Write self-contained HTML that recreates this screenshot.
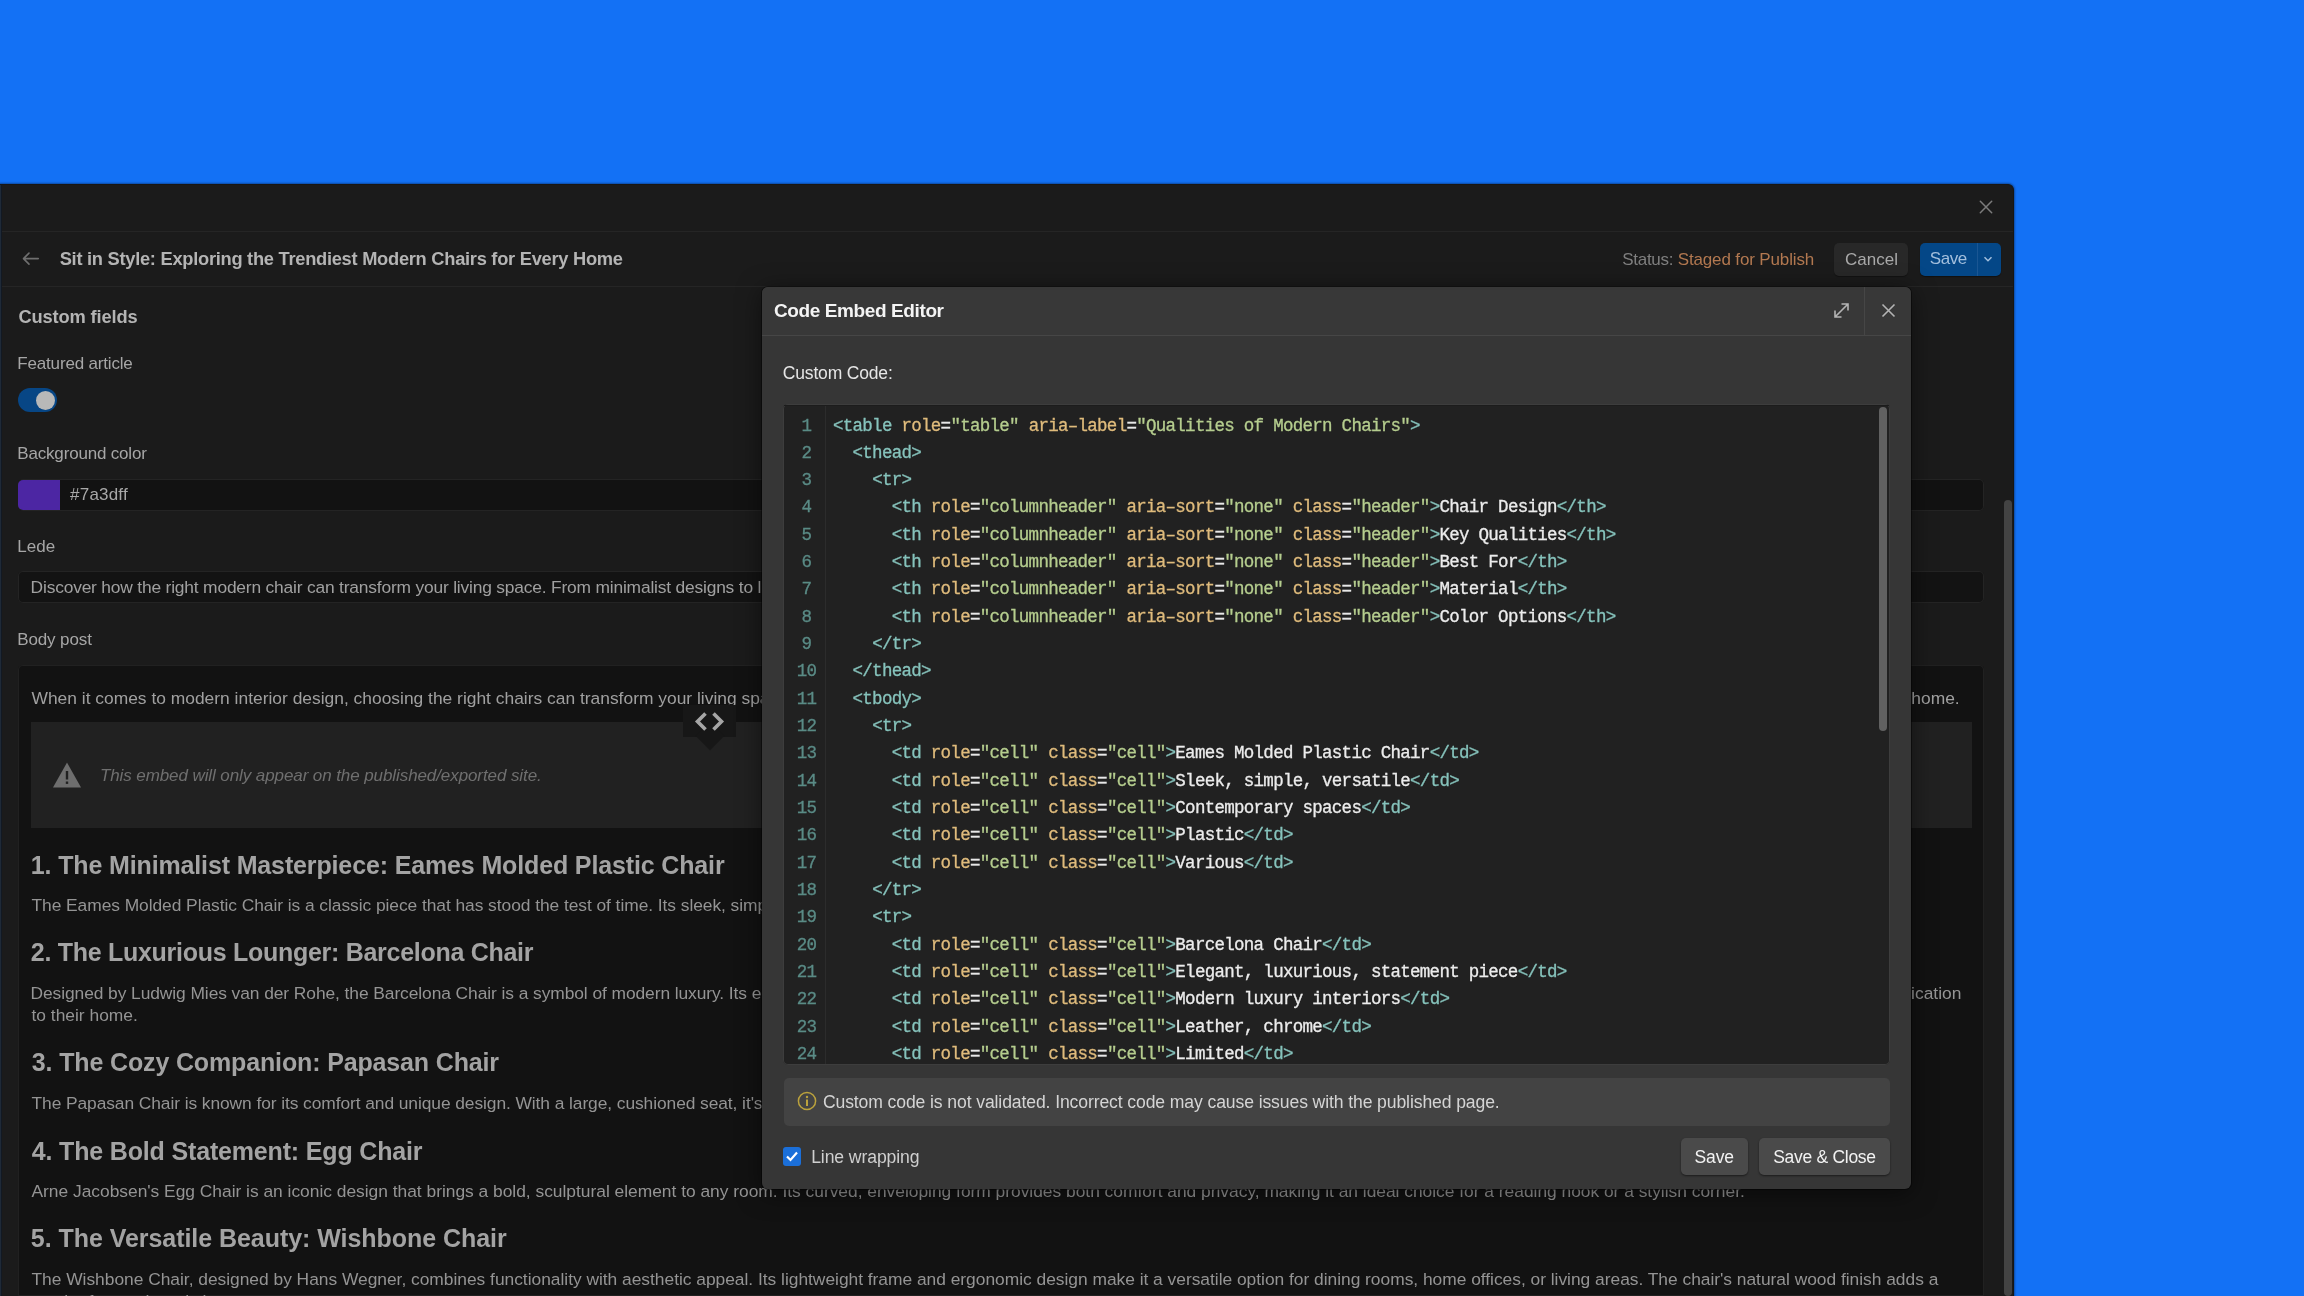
<!DOCTYPE html><html><head><meta charset="utf-8"><style>
html,body{margin:0;padding:0;width:2304px;height:1296px;overflow:hidden;background:#1371f5;font-family:"Liberation Sans",sans-serif;}
.t{position:absolute;line-height:0;white-space:pre;}
.m{position:absolute;white-space:pre;font-family:"Liberation Mono",monospace;-webkit-text-stroke:0.3px currentColor;}
</style></head><body>
<div style="position:absolute;left:0;top:0;width:2304px;height:1296px;will-change:transform">
<div style="position:absolute;left:0px;top:184px;width:2014px;height:1112px;background:#1b1b1b;border-top-right-radius:6px;box-shadow:0 0 2px 1px rgba(0,0,0,0.35);border-top:1px solid #181614;border-right:1px solid #161616;box-sizing:border-box;"></div>
<div style="position:absolute;left:0px;top:185px;width:1px;height:1111px;background:#1f2a38;"></div>
<div style="position:absolute;left:1px;top:185px;width:1px;height:1111px;background:#121923;"></div>
<div style="position:absolute;left:2px;top:231px;width:2011px;height:1px;background:#252525;"></div>
<div style="position:absolute;left:2px;top:286px;width:2011px;height:1px;background:#252525;"></div>
<svg style="position:absolute;left:1979px;top:200px" width="14" height="14" viewBox="0 0 14 14"><path d="M1.3 1.3L12.7 12.7M12.7 1.3L1.3 12.7" stroke="#7c7c7c" stroke-width="1.5" stroke-linecap="round" fill="none"/></svg>
<svg style="position:absolute;left:22px;top:251px" width="18" height="16" viewBox="0 0 18 16"><path d="M16.3 7.6H1.6M7 2.1L1.5 7.6L7 13.1" stroke="#6f6f6f" stroke-width="1.6" stroke-linecap="round" stroke-linejoin="round" fill="none"/></svg>
<div class="t" style="left:59.70px;top:258.50px;font-size:18.3px;color:#b4b4b4;font-weight:700;letter-spacing:-0.274px;font-style:normal;">Sit in Style: Exploring the Trendiest Modern Chairs for Every Home</div>
<div class="t" style="left:1622.30px;top:259.70px;font-size:17px;color:#7f7f7f;font-weight:400;letter-spacing:-0.300px;font-style:normal;">Status:</div>
<div class="t" style="left:1677.70px;top:259.70px;font-size:17px;color:#b27850;font-weight:400;letter-spacing:-0.141px;font-style:normal;">Staged for Publish</div>
<div style="position:absolute;left:1834px;top:243px;width:74px;height:33px;background:#282828;border-radius:5px;box-shadow:0 1px 1px rgba(0,0,0,0.35);"></div>
<div class="t" style="left:1845.10px;top:259.70px;font-size:17px;color:#a9a9a9;font-weight:400;letter-spacing:0.000px;font-style:normal;">Cancel</div>
<div style="position:absolute;left:1920px;top:243px;width:81px;height:33px;background:#044787;border-radius:5px;box-shadow:0 1px 1px rgba(0,0,0,0.4);"></div>
<div style="position:absolute;left:1976.5px;top:243px;width:1.5px;height:33px;background:#1a5693;"></div>
<div class="t" style="left:1929.80px;top:259.00px;font-size:17px;color:#a3bfdd;font-weight:400;letter-spacing:-0.467px;font-style:normal;">Save</div>
<svg style="position:absolute;left:1982px;top:254px" width="12" height="10" viewBox="0 0 12 10"><path d="M2.5 3.2L6 6.7L9.5 3.2" stroke="#a3bfdd" stroke-width="1.5" fill="none"/></svg>
<div class="t" style="left:18.40px;top:316.50px;font-size:18.3px;color:#b4b4b4;font-weight:700;letter-spacing:-0.133px;font-style:normal;">Custom fields</div>
<div class="t" style="left:17.30px;top:363.50px;font-size:17px;color:#a6a6a6;font-weight:400;letter-spacing:-0.173px;font-style:normal;">Featured article</div>
<div style="position:absolute;left:18px;top:388px;width:39px;height:24px;background:#074685;border-radius:12px;"></div>
<div style="position:absolute;left:35.5px;top:391px;width:19.0px;height:19px;background:#b8b8b8;border-radius:50%;"></div>
<div class="t" style="left:17.30px;top:453.50px;font-size:17px;color:#a6a6a6;font-weight:400;letter-spacing:-0.180px;font-style:normal;">Background color</div>
<div style="position:absolute;left:18px;top:479px;width:1966px;height:32px;background:#121212;border-radius:5px;box-shadow:inset 0 0 0 1px #242424;"></div>
<div style="position:absolute;left:18px;top:480px;width:42px;height:30px;background:#4c26a3;border-radius:5px 0 0 5px;"></div>
<div class="t" style="left:70.10px;top:495.00px;font-size:17px;color:#a8a8a8;font-weight:400;letter-spacing:0.200px;font-style:normal;">#7a3dff</div>
<div class="t" style="left:17.20px;top:546.50px;font-size:17px;color:#a6a6a6;font-weight:400;letter-spacing:0.033px;font-style:normal;">Lede</div>
<div style="position:absolute;left:18px;top:571px;width:1966px;height:32px;background:#131313;border-radius:5px;box-shadow:inset 0 0 0 1px #242424;"></div>
<div class="t" style="left:30.60px;top:587.00px;font-size:17.4px;color:#a0a0a0;font-weight:400;letter-spacing:-0.190px;font-style:normal;">Discover how the right modern chair can transform your living space. From minimalist designs to luxurious loungers, find the seat that fits your style.</div>
<div class="t" style="left:17.20px;top:639.50px;font-size:17px;color:#a6a6a6;font-weight:400;letter-spacing:-0.113px;font-style:normal;">Body post</div>
<div style="position:absolute;left:18px;top:665px;width:1966px;height:631px;background:#121212;border-radius:5px 5px 0 0;box-shadow:inset 0 0 0 1px #212121;"></div>
<div class="t" style="left:31.50px;top:698.00px;font-size:17.4px;color:#a0a0a0;font-weight:400;letter-spacing:0.005px;font-style:normal;">When it comes to modern interior design, choosing the right chairs can transform your living space. Whether you prefer clean Scandinavian lines or plush mid-century comfort, there is a chair that</div>
<div class="t" style="left:1765.40px;top:698.00px;font-size:17.4px;color:#a0a0a0;font-weight:400;letter-spacing:0.000px;font-style:normal;">truly elevates your home.</div>
<div style="position:absolute;left:31px;top:722px;width:1941px;height:106px;background:#212121;"></div>
<div style="position:absolute;left:683px;top:704.5px;width:53px;height:32.5px;background:#171717;"></div>
<div style="position:absolute;left:699.5px;top:726px;width:20px;height:20px;background:#171717;transform:rotate(45deg)"></div>
<svg style="position:absolute;left:683px;top:704px" width="53" height="34" viewBox="0 0 53 34"><path d="M22.5 9.5L14.5 17.5L22.5 25.5M30.5 9.5L38.5 17.5L30.5 25.5" stroke="#a6a6a6" stroke-width="3.6" fill="none"/></svg>
<svg style="position:absolute;left:52px;top:761px" width="30" height="27" viewBox="0 0 30 27"><path d="M15 1.5L29 26.5H1Z" fill="#6e6e6e"/><rect x="13.8" y="10" width="2.4" height="8.5" fill="#212121"/><rect x="13.8" y="20.5" width="2.4" height="2.4" fill="#212121"/></svg>
<div class="t" style="left:99.90px;top:775.70px;font-size:17px;color:#6f6f6f;font-weight:400;letter-spacing:-0.088px;font-style:italic;">This embed will only appear on the published/exported site.</div>
<div class="t" style="left:30.80px;top:865.00px;font-size:25px;color:#a3a3a3;font-weight:700;letter-spacing:-0.139px;font-style:normal;">1. The Minimalist Masterpiece: Eames Molded Plastic Chair</div>
<div class="t" style="left:30.80px;top:952.20px;font-size:25px;color:#a3a3a3;font-weight:700;letter-spacing:-0.283px;font-style:normal;">2. The Luxurious Lounger: Barcelona Chair</div>
<div class="t" style="left:31.80px;top:1061.60px;font-size:25px;color:#a3a3a3;font-weight:700;letter-spacing:-0.143px;font-style:normal;">3. The Cozy Companion: Papasan Chair</div>
<div class="t" style="left:31.80px;top:1150.50px;font-size:25px;color:#a3a3a3;font-weight:700;letter-spacing:-0.165px;font-style:normal;">4. The Bold Statement: Egg Chair</div>
<div class="t" style="left:30.80px;top:1238.40px;font-size:25px;color:#a3a3a3;font-weight:700;letter-spacing:-0.047px;font-style:normal;">5. The Versatile Beauty: Wishbone Chair</div>
<div class="t" style="left:31.50px;top:905.20px;font-size:17.4px;color:#949494;font-weight:400;letter-spacing:-0.059px;font-style:normal;">The Eames Molded Plastic Chair is a classic piece that has stood the test of time. Its sleek, simple design fits almost anywhere.</div>
<div class="t" style="left:30.50px;top:992.90px;font-size:17.4px;color:#949494;font-weight:400;letter-spacing:-0.079px;font-style:normal;">Designed by Ludwig Mies van der Rohe, the Barcelona Chair is a symbol of modern luxury. Its elegant frame and sumptuous leather cushions make it the perfect choice for anyone looking to bring timeless</div>
<div class="t" style="left:31.50px;top:1014.80px;font-size:17.4px;color:#949494;font-weight:400;letter-spacing:0.000px;font-style:normal;">to their home.</div>
<div class="t" style="left:31.50px;top:1103.10px;font-size:17.4px;color:#949494;font-weight:400;letter-spacing:-0.083px;font-style:normal;">The Papasan Chair is known for its comfort and unique design. With a large, cushioned seat, it&#x27;s perfect for lounging.</div>
<div class="t" style="left:31.50px;top:1191.40px;font-size:17.4px;color:#949494;font-weight:400;letter-spacing:-0.016px;font-style:normal;">Arne Jacobsen&#x27;s Egg Chair is an iconic design that brings a bold, sculptural element to any room. Its curved, enveloping form provides both comfort and privacy, making it an ideal choice for a reading nook or a stylish corner.</div>
<div class="t" style="left:31.50px;top:1279.00px;font-size:17.4px;color:#949494;font-weight:400;letter-spacing:-0.023px;font-style:normal;">The Wishbone Chair, designed by Hans Wegner, combines functionality with aesthetic appeal. Its lightweight frame and ergonomic design make it a versatile option for dining rooms, home offices, or living areas. The chair&#x27;s natural wood finish adds a</div>
<div class="t" style="left:31.50px;top:1301.00px;font-size:17.4px;color:#949494;font-weight:400;letter-spacing:0.000px;font-style:normal;">touch of warmth and character to any space.</div>
<div class="t" style="left:1665.50px;top:992.90px;font-size:17.4px;color:#949494;font-weight:400;letter-spacing:0.000px;font-style:normal;">elegance and a touch of sophistication</div>
<div style="position:absolute;left:2004px;top:500px;width:8px;height:796px;background:#434343;border-radius:4px;"></div>
<div style="position:absolute;left:762px;top:287px;width:1149px;height:902px;background:#363636;border-radius:6px;box-shadow:0 0 0 1px rgba(0,0,0,0.45), 0 4px 24px rgba(0,0,0,0.5);"></div>
<div style="position:absolute;left:762px;top:287px;width:1149px;height:48px;background:#383838;border-radius:6px 6px 0 0;"></div>
<div style="position:absolute;left:762px;top:335px;width:1149px;height:1px;background:#464646;"></div>
<div style="position:absolute;left:1864px;top:287px;width:1px;height:48px;background:#464646;"></div>
<div class="t" style="left:774.00px;top:310.50px;font-size:19px;color:#f4f4f4;font-weight:700;letter-spacing:-0.394px;font-style:normal;">Code Embed Editor</div>
<svg style="position:absolute;left:1832px;top:301px" width="19" height="19" viewBox="0 0 19 19"><path d="M3 16L16 3M9.5 3H16V9.5M3 9.5V16H9.5" stroke="#b4b4b4" stroke-width="1.6" fill="none"/></svg>
<svg style="position:absolute;left:1881px;top:303px" width="15" height="15" viewBox="0 0 15 15"><path d="M1.5 1.5L13.5 13.5M13.5 1.5L1.5 13.5" stroke="#b4b4b4" stroke-width="1.6" fill="none"/></svg>
<div class="t" style="left:782.80px;top:373.00px;font-size:17.5px;color:#e6e6e6;font-weight:400;letter-spacing:-0.173px;font-style:normal;">Custom Code:</div>
<div style="position:absolute;left:783px;top:404px;width:1107px;height:661px;background:#212121;border-radius:5px;box-shadow:inset 0 0 0 1px #3d3d3d;"></div>
<div style="position:absolute;left:784px;top:405px;width:1105px;height:1px;background:#1c1c1c;"></div>
<div style="position:absolute;left:825px;top:406px;width:1px;height:658px;background:#2c2c2c;"></div>
<div style="position:absolute;left:1879px;top:407px;width:8px;height:324px;background:#616161;border-radius:4px;"></div>
<div class="m" style="left:833px;top:425.50px;line-height:0;font-size:17.5px;letter-spacing:-0.7217px"><span style="color:#86c3bc">&lt;table</span> <span style="color:#dfbb7c">role</span><span style="color:#e8e8e8">=</span><span style="color:#b5cd8e">"table"</span> <span style="color:#dfbb7c">aria&#8211;label</span><span style="color:#e8e8e8">=</span><span style="color:#b5cd8e">"Qualities of Modern Chairs"</span><span style="color:#86c3bc">&gt;</span></div>
<div class="m" style="left:801.61px;top:425.50px;line-height:0;font-size:17.5px;color:#5a8b86;letter-spacing:-0.7217px">1</div>
<div class="m" style="left:833px;top:452.83px;line-height:0;font-size:17.5px;letter-spacing:-0.7217px">  <span style="color:#86c3bc">&lt;thead&gt;</span></div>
<div class="m" style="left:801.61px;top:452.83px;line-height:0;font-size:17.5px;color:#5a8b86;letter-spacing:-0.7217px">2</div>
<div class="m" style="left:833px;top:480.16px;line-height:0;font-size:17.5px;letter-spacing:-0.7217px">    <span style="color:#86c3bc">&lt;tr&gt;</span></div>
<div class="m" style="left:801.61px;top:480.16px;line-height:0;font-size:17.5px;color:#5a8b86;letter-spacing:-0.7217px">3</div>
<div class="m" style="left:833px;top:507.49px;line-height:0;font-size:17.5px;letter-spacing:-0.7217px">      <span style="color:#86c3bc">&lt;th</span> <span style="color:#dfbb7c">role</span><span style="color:#e8e8e8">=</span><span style="color:#b5cd8e">"columnheader"</span> <span style="color:#dfbb7c">aria&#8211;sort</span><span style="color:#e8e8e8">=</span><span style="color:#b5cd8e">"none"</span> <span style="color:#dfbb7c">class</span><span style="color:#e8e8e8">=</span><span style="color:#b5cd8e">"header"</span><span style="color:#86c3bc">&gt;</span><span style="color:#ececec">Chair Design</span><span style="color:#86c3bc">&lt;/th&gt;</span></div>
<div class="m" style="left:801.61px;top:507.49px;line-height:0;font-size:17.5px;color:#5a8b86;letter-spacing:-0.7217px">4</div>
<div class="m" style="left:833px;top:534.82px;line-height:0;font-size:17.5px;letter-spacing:-0.7217px">      <span style="color:#86c3bc">&lt;th</span> <span style="color:#dfbb7c">role</span><span style="color:#e8e8e8">=</span><span style="color:#b5cd8e">"columnheader"</span> <span style="color:#dfbb7c">aria&#8211;sort</span><span style="color:#e8e8e8">=</span><span style="color:#b5cd8e">"none"</span> <span style="color:#dfbb7c">class</span><span style="color:#e8e8e8">=</span><span style="color:#b5cd8e">"header"</span><span style="color:#86c3bc">&gt;</span><span style="color:#ececec">Key Qualities</span><span style="color:#86c3bc">&lt;/th&gt;</span></div>
<div class="m" style="left:801.61px;top:534.82px;line-height:0;font-size:17.5px;color:#5a8b86;letter-spacing:-0.7217px">5</div>
<div class="m" style="left:833px;top:562.15px;line-height:0;font-size:17.5px;letter-spacing:-0.7217px">      <span style="color:#86c3bc">&lt;th</span> <span style="color:#dfbb7c">role</span><span style="color:#e8e8e8">=</span><span style="color:#b5cd8e">"columnheader"</span> <span style="color:#dfbb7c">aria&#8211;sort</span><span style="color:#e8e8e8">=</span><span style="color:#b5cd8e">"none"</span> <span style="color:#dfbb7c">class</span><span style="color:#e8e8e8">=</span><span style="color:#b5cd8e">"header"</span><span style="color:#86c3bc">&gt;</span><span style="color:#ececec">Best For</span><span style="color:#86c3bc">&lt;/th&gt;</span></div>
<div class="m" style="left:801.61px;top:562.15px;line-height:0;font-size:17.5px;color:#5a8b86;letter-spacing:-0.7217px">6</div>
<div class="m" style="left:833px;top:589.48px;line-height:0;font-size:17.5px;letter-spacing:-0.7217px">      <span style="color:#86c3bc">&lt;th</span> <span style="color:#dfbb7c">role</span><span style="color:#e8e8e8">=</span><span style="color:#b5cd8e">"columnheader"</span> <span style="color:#dfbb7c">aria&#8211;sort</span><span style="color:#e8e8e8">=</span><span style="color:#b5cd8e">"none"</span> <span style="color:#dfbb7c">class</span><span style="color:#e8e8e8">=</span><span style="color:#b5cd8e">"header"</span><span style="color:#86c3bc">&gt;</span><span style="color:#ececec">Material</span><span style="color:#86c3bc">&lt;/th&gt;</span></div>
<div class="m" style="left:801.61px;top:589.48px;line-height:0;font-size:17.5px;color:#5a8b86;letter-spacing:-0.7217px">7</div>
<div class="m" style="left:833px;top:616.81px;line-height:0;font-size:17.5px;letter-spacing:-0.7217px">      <span style="color:#86c3bc">&lt;th</span> <span style="color:#dfbb7c">role</span><span style="color:#e8e8e8">=</span><span style="color:#b5cd8e">"columnheader"</span> <span style="color:#dfbb7c">aria&#8211;sort</span><span style="color:#e8e8e8">=</span><span style="color:#b5cd8e">"none"</span> <span style="color:#dfbb7c">class</span><span style="color:#e8e8e8">=</span><span style="color:#b5cd8e">"header"</span><span style="color:#86c3bc">&gt;</span><span style="color:#ececec">Color Options</span><span style="color:#86c3bc">&lt;/th&gt;</span></div>
<div class="m" style="left:801.61px;top:616.81px;line-height:0;font-size:17.5px;color:#5a8b86;letter-spacing:-0.7217px">8</div>
<div class="m" style="left:833px;top:644.14px;line-height:0;font-size:17.5px;letter-spacing:-0.7217px">    <span style="color:#86c3bc">&lt;/tr&gt;</span></div>
<div class="m" style="left:801.61px;top:644.14px;line-height:0;font-size:17.5px;color:#5a8b86;letter-spacing:-0.7217px">9</div>
<div class="m" style="left:833px;top:671.47px;line-height:0;font-size:17.5px;letter-spacing:-0.7217px">  <span style="color:#86c3bc">&lt;/thead&gt;</span></div>
<div class="m" style="left:796.72px;top:671.47px;line-height:0;font-size:17.5px;color:#5a8b86;letter-spacing:-0.7217px">10</div>
<div class="m" style="left:833px;top:698.80px;line-height:0;font-size:17.5px;letter-spacing:-0.7217px">  <span style="color:#86c3bc">&lt;tbody&gt;</span></div>
<div class="m" style="left:796.72px;top:698.80px;line-height:0;font-size:17.5px;color:#5a8b86;letter-spacing:-0.7217px">11</div>
<div class="m" style="left:833px;top:726.13px;line-height:0;font-size:17.5px;letter-spacing:-0.7217px">    <span style="color:#86c3bc">&lt;tr&gt;</span></div>
<div class="m" style="left:796.72px;top:726.13px;line-height:0;font-size:17.5px;color:#5a8b86;letter-spacing:-0.7217px">12</div>
<div class="m" style="left:833px;top:753.46px;line-height:0;font-size:17.5px;letter-spacing:-0.7217px">      <span style="color:#86c3bc">&lt;td</span> <span style="color:#dfbb7c">role</span><span style="color:#e8e8e8">=</span><span style="color:#b5cd8e">"cell"</span> <span style="color:#dfbb7c">class</span><span style="color:#e8e8e8">=</span><span style="color:#b5cd8e">"cell"</span><span style="color:#86c3bc">&gt;</span><span style="color:#ececec">Eames Molded Plastic Chair</span><span style="color:#86c3bc">&lt;/td&gt;</span></div>
<div class="m" style="left:796.72px;top:753.46px;line-height:0;font-size:17.5px;color:#5a8b86;letter-spacing:-0.7217px">13</div>
<div class="m" style="left:833px;top:780.79px;line-height:0;font-size:17.5px;letter-spacing:-0.7217px">      <span style="color:#86c3bc">&lt;td</span> <span style="color:#dfbb7c">role</span><span style="color:#e8e8e8">=</span><span style="color:#b5cd8e">"cell"</span> <span style="color:#dfbb7c">class</span><span style="color:#e8e8e8">=</span><span style="color:#b5cd8e">"cell"</span><span style="color:#86c3bc">&gt;</span><span style="color:#ececec">Sleek, simple, versatile</span><span style="color:#86c3bc">&lt;/td&gt;</span></div>
<div class="m" style="left:796.72px;top:780.79px;line-height:0;font-size:17.5px;color:#5a8b86;letter-spacing:-0.7217px">14</div>
<div class="m" style="left:833px;top:808.12px;line-height:0;font-size:17.5px;letter-spacing:-0.7217px">      <span style="color:#86c3bc">&lt;td</span> <span style="color:#dfbb7c">role</span><span style="color:#e8e8e8">=</span><span style="color:#b5cd8e">"cell"</span> <span style="color:#dfbb7c">class</span><span style="color:#e8e8e8">=</span><span style="color:#b5cd8e">"cell"</span><span style="color:#86c3bc">&gt;</span><span style="color:#ececec">Contemporary spaces</span><span style="color:#86c3bc">&lt;/td&gt;</span></div>
<div class="m" style="left:796.72px;top:808.12px;line-height:0;font-size:17.5px;color:#5a8b86;letter-spacing:-0.7217px">15</div>
<div class="m" style="left:833px;top:835.45px;line-height:0;font-size:17.5px;letter-spacing:-0.7217px">      <span style="color:#86c3bc">&lt;td</span> <span style="color:#dfbb7c">role</span><span style="color:#e8e8e8">=</span><span style="color:#b5cd8e">"cell"</span> <span style="color:#dfbb7c">class</span><span style="color:#e8e8e8">=</span><span style="color:#b5cd8e">"cell"</span><span style="color:#86c3bc">&gt;</span><span style="color:#ececec">Plastic</span><span style="color:#86c3bc">&lt;/td&gt;</span></div>
<div class="m" style="left:796.72px;top:835.45px;line-height:0;font-size:17.5px;color:#5a8b86;letter-spacing:-0.7217px">16</div>
<div class="m" style="left:833px;top:862.78px;line-height:0;font-size:17.5px;letter-spacing:-0.7217px">      <span style="color:#86c3bc">&lt;td</span> <span style="color:#dfbb7c">role</span><span style="color:#e8e8e8">=</span><span style="color:#b5cd8e">"cell"</span> <span style="color:#dfbb7c">class</span><span style="color:#e8e8e8">=</span><span style="color:#b5cd8e">"cell"</span><span style="color:#86c3bc">&gt;</span><span style="color:#ececec">Various</span><span style="color:#86c3bc">&lt;/td&gt;</span></div>
<div class="m" style="left:796.72px;top:862.78px;line-height:0;font-size:17.5px;color:#5a8b86;letter-spacing:-0.7217px">17</div>
<div class="m" style="left:833px;top:890.11px;line-height:0;font-size:17.5px;letter-spacing:-0.7217px">    <span style="color:#86c3bc">&lt;/tr&gt;</span></div>
<div class="m" style="left:796.72px;top:890.11px;line-height:0;font-size:17.5px;color:#5a8b86;letter-spacing:-0.7217px">18</div>
<div class="m" style="left:833px;top:917.44px;line-height:0;font-size:17.5px;letter-spacing:-0.7217px">    <span style="color:#86c3bc">&lt;tr&gt;</span></div>
<div class="m" style="left:796.72px;top:917.44px;line-height:0;font-size:17.5px;color:#5a8b86;letter-spacing:-0.7217px">19</div>
<div class="m" style="left:833px;top:944.77px;line-height:0;font-size:17.5px;letter-spacing:-0.7217px">      <span style="color:#86c3bc">&lt;td</span> <span style="color:#dfbb7c">role</span><span style="color:#e8e8e8">=</span><span style="color:#b5cd8e">"cell"</span> <span style="color:#dfbb7c">class</span><span style="color:#e8e8e8">=</span><span style="color:#b5cd8e">"cell"</span><span style="color:#86c3bc">&gt;</span><span style="color:#ececec">Barcelona Chair</span><span style="color:#86c3bc">&lt;/td&gt;</span></div>
<div class="m" style="left:796.72px;top:944.77px;line-height:0;font-size:17.5px;color:#5a8b86;letter-spacing:-0.7217px">20</div>
<div class="m" style="left:833px;top:972.10px;line-height:0;font-size:17.5px;letter-spacing:-0.7217px">      <span style="color:#86c3bc">&lt;td</span> <span style="color:#dfbb7c">role</span><span style="color:#e8e8e8">=</span><span style="color:#b5cd8e">"cell"</span> <span style="color:#dfbb7c">class</span><span style="color:#e8e8e8">=</span><span style="color:#b5cd8e">"cell"</span><span style="color:#86c3bc">&gt;</span><span style="color:#ececec">Elegant, luxurious, statement piece</span><span style="color:#86c3bc">&lt;/td&gt;</span></div>
<div class="m" style="left:796.72px;top:972.10px;line-height:0;font-size:17.5px;color:#5a8b86;letter-spacing:-0.7217px">21</div>
<div class="m" style="left:833px;top:999.43px;line-height:0;font-size:17.5px;letter-spacing:-0.7217px">      <span style="color:#86c3bc">&lt;td</span> <span style="color:#dfbb7c">role</span><span style="color:#e8e8e8">=</span><span style="color:#b5cd8e">"cell"</span> <span style="color:#dfbb7c">class</span><span style="color:#e8e8e8">=</span><span style="color:#b5cd8e">"cell"</span><span style="color:#86c3bc">&gt;</span><span style="color:#ececec">Modern luxury interiors</span><span style="color:#86c3bc">&lt;/td&gt;</span></div>
<div class="m" style="left:796.72px;top:999.43px;line-height:0;font-size:17.5px;color:#5a8b86;letter-spacing:-0.7217px">22</div>
<div class="m" style="left:833px;top:1026.76px;line-height:0;font-size:17.5px;letter-spacing:-0.7217px">      <span style="color:#86c3bc">&lt;td</span> <span style="color:#dfbb7c">role</span><span style="color:#e8e8e8">=</span><span style="color:#b5cd8e">"cell"</span> <span style="color:#dfbb7c">class</span><span style="color:#e8e8e8">=</span><span style="color:#b5cd8e">"cell"</span><span style="color:#86c3bc">&gt;</span><span style="color:#ececec">Leather, chrome</span><span style="color:#86c3bc">&lt;/td&gt;</span></div>
<div class="m" style="left:796.72px;top:1026.76px;line-height:0;font-size:17.5px;color:#5a8b86;letter-spacing:-0.7217px">23</div>
<div class="m" style="left:833px;top:1054.09px;line-height:0;font-size:17.5px;letter-spacing:-0.7217px">      <span style="color:#86c3bc">&lt;td</span> <span style="color:#dfbb7c">role</span><span style="color:#e8e8e8">=</span><span style="color:#b5cd8e">"cell"</span> <span style="color:#dfbb7c">class</span><span style="color:#e8e8e8">=</span><span style="color:#b5cd8e">"cell"</span><span style="color:#86c3bc">&gt;</span><span style="color:#ececec">Limited</span><span style="color:#86c3bc">&lt;/td&gt;</span></div>
<div class="m" style="left:796.72px;top:1054.09px;line-height:0;font-size:17.5px;color:#5a8b86;letter-spacing:-0.7217px">24</div>
<div style="position:absolute;left:784px;top:1078px;width:1106px;height:48px;background:#434343;border-radius:5px;"></div>
<svg style="position:absolute;left:797px;top:1091px" width="20" height="20" viewBox="0 0 20 20"><circle cx="10" cy="10" r="8.6" stroke="#bba23d" stroke-width="1.5" fill="none"/><rect x="9" y="8.5" width="2" height="6.5" fill="#bba23d"/><circle cx="10" cy="6" r="1.2" fill="#bba23d"/></svg>
<div class="t" style="left:822.90px;top:1102.00px;font-size:17.6px;color:#d4d4d4;font-weight:400;letter-spacing:-0.114px;font-style:normal;">Custom code is not validated. Incorrect code may cause issues with the published page.</div>
<div style="position:absolute;left:783px;top:1147px;width:18px;height:19px;background:#1b6fd9;border-radius:3px;"></div>
<svg style="position:absolute;left:783px;top:1147px" width="18" height="19" viewBox="0 0 18 19"><path d="M4 9.5L7.5 13L14 5.5" stroke="#fff" stroke-width="2.2" fill="none"/></svg>
<div class="t" style="left:811.20px;top:1156.50px;font-size:17.6px;color:#cfcfcf;font-weight:400;letter-spacing:-0.100px;font-style:normal;">Line wrapping</div>
<div style="position:absolute;left:1681px;top:1138px;width:67px;height:37px;background:#4a4a4a;border-radius:5px;box-shadow:0 1px 2px rgba(0,0,0,0.5);"></div>
<div class="t" style="left:1694.60px;top:1157.00px;font-size:17.5px;color:#f2f2f2;font-weight:400;letter-spacing:-0.167px;font-style:normal;">Save</div>
<div style="position:absolute;left:1759px;top:1138px;width:131px;height:37px;background:#4a4a4a;border-radius:5px;box-shadow:0 1px 2px rgba(0,0,0,0.5);"></div>
<div class="t" style="left:1773.20px;top:1157.00px;font-size:17.5px;color:#f2f2f2;font-weight:400;letter-spacing:-0.291px;font-style:normal;">Save &amp; Close</div>
</div></body></html>
